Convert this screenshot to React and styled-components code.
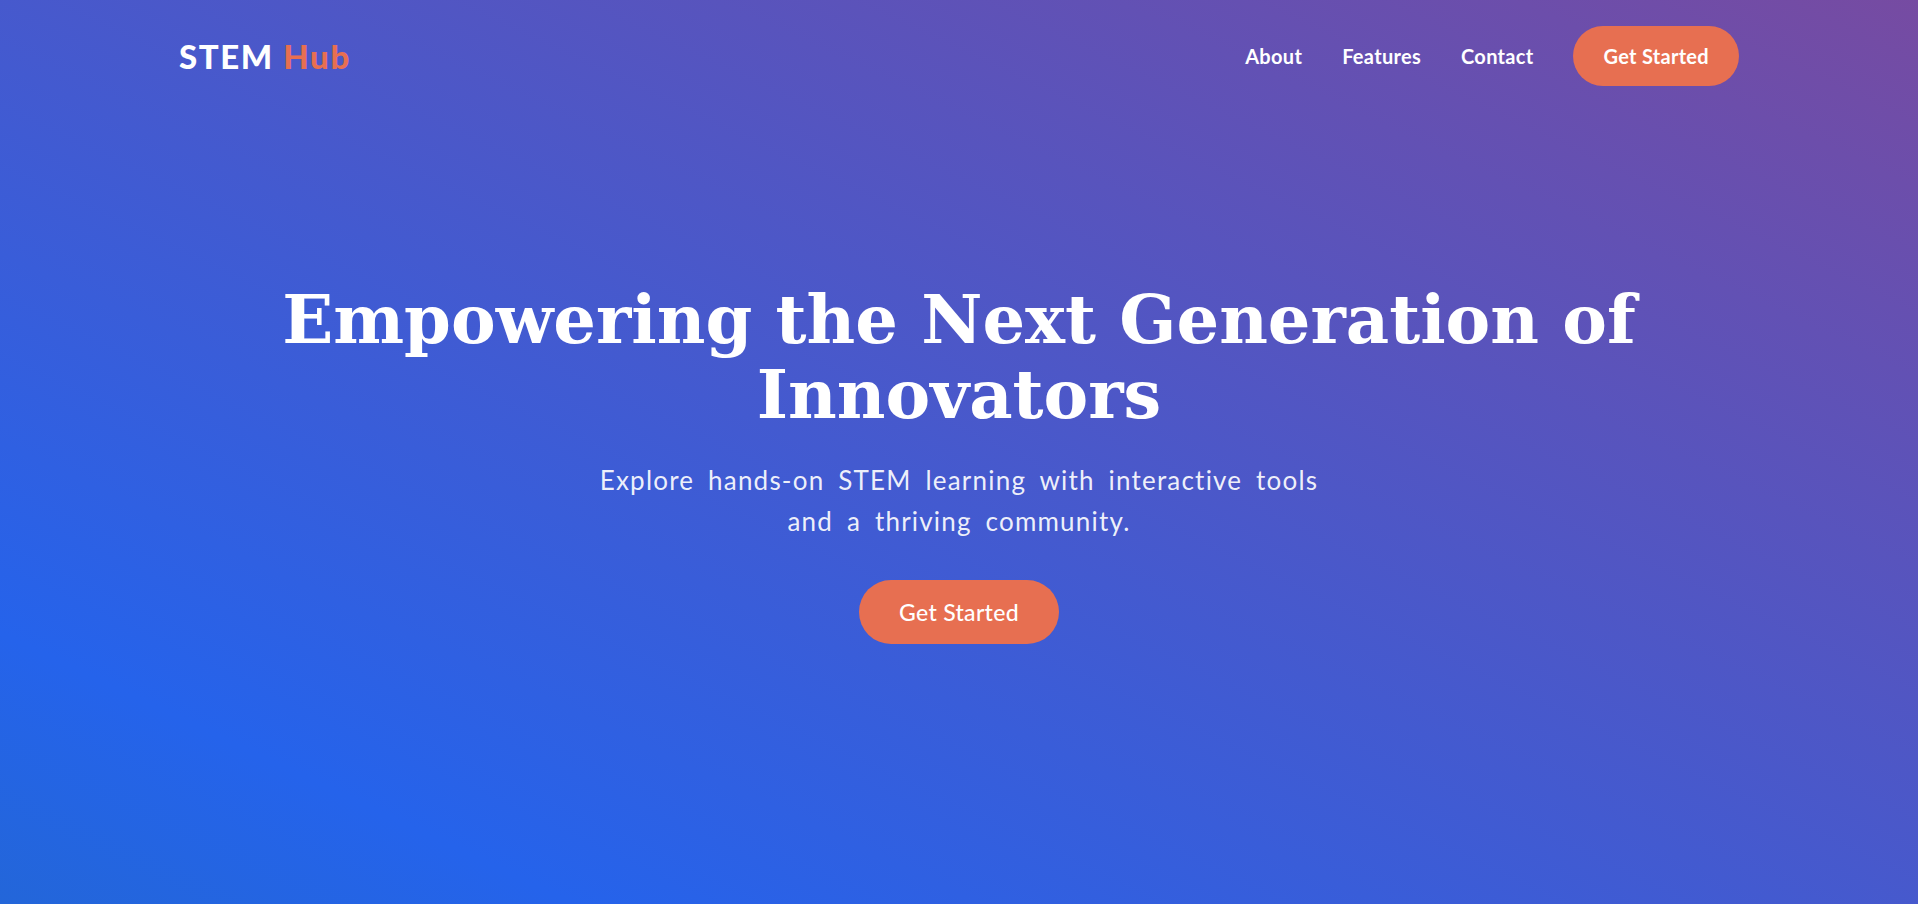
import React from 'react'
import styled, { createGlobalStyle } from 'styled-components'

const GlobalStyle = createGlobalStyle`
  * {
    box-sizing: border-box;
  }
  html, body {
    margin: 0;
    padding: 0;
  }
  body {
    font-family: Lato, "Noto Sans", sans-serif;
    color: #fff;
  }
`

const Page = styled.div`
  min-height: 904px;
  background: linear-gradient(
    to top right,
    #2366d9 0%,
    #2563eb 15%,
    #764ba2 100%
  );
  display: flex;
  flex-direction: column;
`

const Header = styled.header`
  width: 100%;
  max-width: 1560px;
  margin: 0 auto;
  padding: 26px 0;
  display: flex;
  align-items: center;
  justify-content: space-between;
`

const Logo = styled.div`
  font-size: 33px;
  font-weight: 900;
  letter-spacing: 1.6px;
  color: #fff;

  span {
    color: #e76f51;
  }
`

const Nav = styled.nav`
  display: flex;
  align-items: center;
  gap: 40px;
`

const NavLink = styled.a`
  color: #fff;
  text-decoration: none;
  font-size: 20px;
  font-weight: 700;
  letter-spacing: 0.3px;
`

const Button = styled.a`
  display: inline-flex;
  align-items: center;
  justify-content: center;
  background: #e76f51;
  color: #fff;
  text-decoration: none;
  border-radius: 999px;
  letter-spacing: 0.3px;
  font-weight: ${(p) => (p.$large ? 500 : 700)};
  font-size: ${(p) => (p.$large ? '23px' : '20px')};
  height: ${(p) => (p.$large ? '64px' : '60px')};
  padding: 0 ${(p) => (p.$large ? '40px' : '30px')};
`

const Hero = styled.main`
  flex: 1;
  display: flex;
  flex-direction: column;
  align-items: center;
  text-align: center;
  padding: 170px 20px 0;
`

const Title = styled.h1`
  margin: 0;
  max-width: 1450px;
  font-family: "DejaVu Serif", "Liberation Serif", serif;
  font-weight: 700;
  font-size: 67px;
  line-height: 75px;
`

const Subtitle = styled.p`
  margin: 28px 0 38px;
  max-width: 745px;
  font-size: 26px;
  line-height: 41px;
  letter-spacing: 1.2px;
  word-spacing: 6px;
  color: rgba(255, 255, 255, 0.92);
`

export default function App() {
  return (
    <>
      <GlobalStyle />
      <Page>
        <Header>
          <Logo>
            STEM <span>Hub</span>
          </Logo>
          <Nav>
            <NavLink href="#about">About</NavLink>
            <NavLink href="#features">Features</NavLink>
            <NavLink href="#contact">Contact</NavLink>
            <Button href="#start">Get Started</Button>
          </Nav>
        </Header>
        <Hero>
          <Title>Empowering the Next Generation of Innovators</Title>
          <Subtitle>
            Explore hands-on STEM learning with interactive tools and a thriving
            community.
          </Subtitle>
          <Button href="#start" $large>
            Get Started
          </Button>
        </Hero>
      </Page>
    </>
  )
}
